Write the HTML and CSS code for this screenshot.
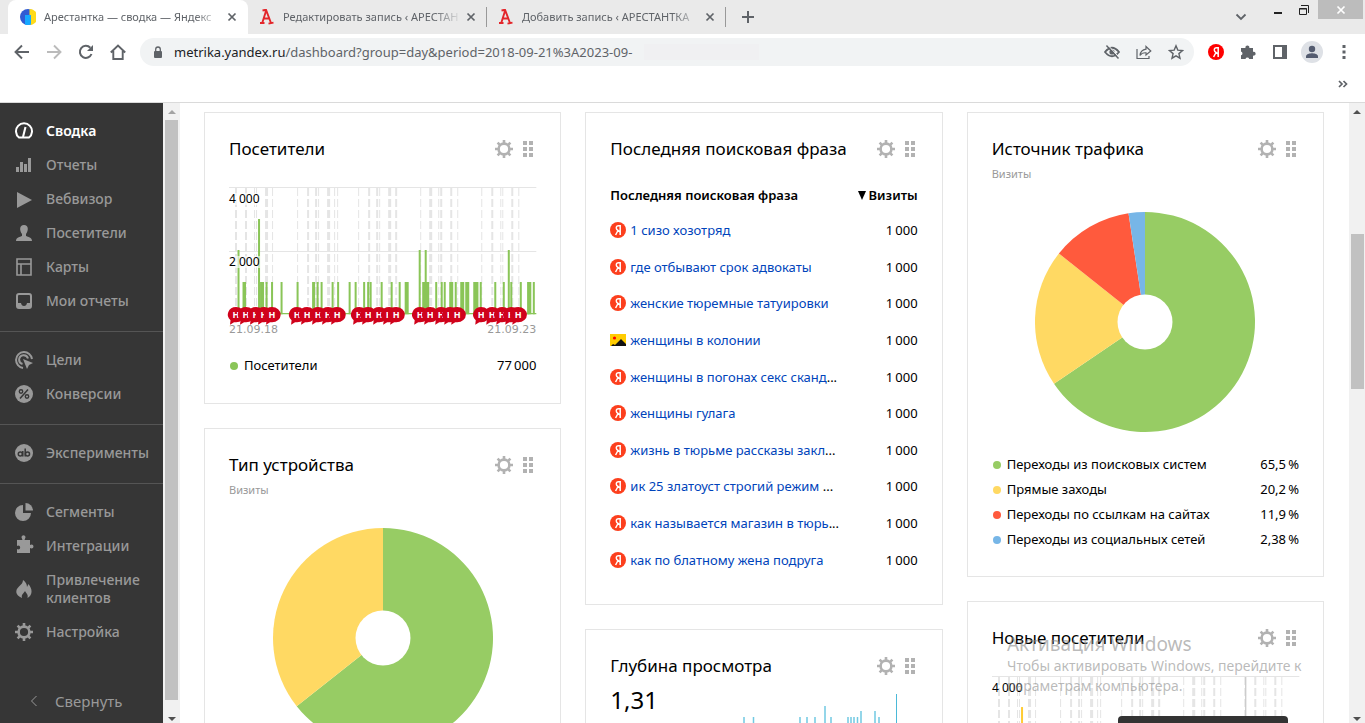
FILE: index.html
```html
<!DOCTYPE html>
<html lang="ru">
<head>
<meta charset="utf-8">
<title>Арестантка — сводка — Яндекс Метрика</title>
<link rel="stylesheet" href="styles.css">
</head>
<body>
<svg class="sprite" aria-hidden="true">
  <symbol id="gear" viewBox="0 0 18 18">
    <circle cx="9" cy="9" r="5.400" fill="none" stroke="currentColor" stroke-width="2.600"/>
    <path d="M9 0v4M9 14v4M0 9h4M14 9h4M2.600 2.600l3 3M12.400 12.400l3 3M15.400 2.600l-3 3M5.600 12.400l-3 3" stroke="currentColor" stroke-width="2.600"/>
  </symbol>
  <symbol id="dots" viewBox="0 0 10 16">
    <path fill="currentColor" d="M0 0h4v4H0zM6 0h4v4H6zM0 6h4v4H0zM6 6h4v4H6zM0 12h4v4H0zM6 12h4v4H6z"/>
  </symbol>
  <symbol id="close" viewBox="0 0 10 10"><path d="M1.500 1.500l7 7M8.500 1.500l-7 7" stroke="currentColor" stroke-width="1.700"/></symbol>
  <symbol id="ya" viewBox="0 0 16 16">
    <circle cx="8" cy="8" r="8" fill="currentColor"/>
    <path d="M10.200 3v10M10.200 3.700H8.600c-1.600 0-2.300.9-2.300 2.200 0 1.200.6 1.900 1.700 2.600L10 9.800M8 8.500L5.600 13" fill="none" stroke="#fff" stroke-width="1.500"/>
  </symbol>
  <symbol id="up" viewBox="0 0 8 4"><path d="M0 4l4-4 4 4z" fill="currentColor"/></symbol>
  <symbol id="down" viewBox="0 0 8 4"><path d="M0 0l4 4 4-4z" fill="currentColor"/></symbol>
  <symbol id="site" viewBox="0 0 16 16"><path d="M3.500 1.500l3.500-.8 4.800 12.800M7 2L3.400 13.500M4.800 9.500h5.400M1 14h4.500M9.500 14.600l5-1" fill="none" stroke="#e3262b" stroke-width="1.900"/></symbol>
</svg>

<header class="tabstrip">
  <div class="tab tab-active">
    <svg class="favicon" viewBox="0 0 16 16"><circle cx="8" cy="8" r="8" fill="#315bd3"/><path d="M9.500 0A8 8 0 0 1 9.500 16z" fill="#ffdb1a"/><path d="M5 6h6v9.500a8 8 0 0 1-6 0z" fill="#16a8ff"/><path d="M11 .6a8 8 0 0 1 0 14.800z" fill="#ffdb1a"/></svg>
    <span class="tab-title">Арестантка — сводка — Яндекс</span>
    <button class="icon-btn tab-close" aria-label="Закрыть вкладку"><svg width="10" height="10"><use href="#close"/></svg></button>
  </div>
  <div class="tab">
    <svg class="favicon"><use href="#site"/></svg>
    <span class="tab-title">Редактировать запись ‹ АРЕСТАН</span>
    <button class="icon-btn tab-close" aria-label="Закрыть вкладку"><svg width="10" height="10"><use href="#close"/></svg></button>
  </div>
  <div class="tab">
    <svg class="favicon"><use href="#site"/></svg>
    <span class="tab-title">Добавить запись ‹ АРЕСТАНТКА</span>
    <button class="icon-btn tab-close" aria-label="Закрыть вкладку"><svg width="10" height="10"><use href="#close"/></svg></button>
  </div>
  <button class="icon-btn new-tab" aria-label="Новая вкладка"><svg width="12" height="12" viewBox="0 0 12 12"><path d="M6 0v12M0 6h12" stroke="currentColor" stroke-width="2"/></svg></button>
  <div class="window-controls">
    <button class="icon-btn tab-search" aria-label="Поиск вкладок"><svg width="12" height="8" viewBox="0 0 12 8"><path d="M1.500 1.500L6 6l4.500-4.500" fill="none" stroke="#5f6368" stroke-width="1.800"/></svg></button>
    <button class="icon-btn win" aria-label="Свернуть"><svg width="12" height="10" viewBox="0 0 12 10"><path d="M2 7h8v2H2z" fill="#222"/></svg></button>
    <button class="icon-btn win" aria-label="Окно"><svg width="12" height="12" viewBox="0 0 12 12"><path d="M1.500 4.500h7v6h-7zM1 5h8M3 1.500h7.500V9" fill="none" stroke="#222"/></svg></button>
    <button class="icon-btn win-close" aria-label="Закрыть"><svg width="10" height="10"><use href="#close"/></svg></button>
  </div>
</header>

<nav class="toolbar" aria-label="Браузер">
  <button class="icon-btn nav-btn" aria-label="Назад"><svg width="16" height="16" viewBox="0 0 16 16"><path d="M15 8H2M8 1.500L1.500 8 8 14.500" fill="none" stroke="currentColor" stroke-width="1.900"/></svg></button>
  <button class="icon-btn nav-btn faded" aria-label="Вперёд"><svg width="16" height="16" viewBox="0 0 16 16"><path d="M1 8h13M8 1.500L14.500 8 8 14.500" fill="none" stroke="currentColor" stroke-width="1.900"/></svg></button>
  <button class="icon-btn nav-btn" aria-label="Обновить"><svg width="16" height="16" viewBox="0 0 16 16"><path d="M13.500 10A6 6 0 1 1 12.300 3.800" fill="none" stroke="currentColor" stroke-width="2"/><path d="M15 1v6H9z" fill="currentColor"/></svg></button>
  <button class="icon-btn nav-btn" aria-label="Домой"><svg width="16" height="16" viewBox="0 0 16 16"><path d="M.8 8.500L8 1.500l7.200 7M3.300 7v8h9.400V7" fill="none" stroke="currentColor" stroke-width="1.900"/></svg></button>
  <div class="omnibox">
    <svg width="10" height="13" viewBox="0 0 10 13"><rect x="1" y="5" width="8" height="7" rx="1" fill="#5f6368"/><path d="M2.700 6V3.300a2.300 2.300 0 0 1 4.600 0V6" fill="none" stroke="#5f6368" stroke-width="1.300"/></svg>
    <span class="url" role="textbox" aria-label="Адрес"><b>metrika.yandex.ru</b>/dashboard?group=day&amp;period=2018-09-21%3A2023-09-</span>
    <span class="smudge"></span>
    <span class="omni-actions">
      <button class="icon-btn" aria-label="Файлы cookie"><svg width="16" height="16" viewBox="0 0 16 16"><path d="M1 8q7-8.500 14 0q-7 8.500-14 0z" fill="none" stroke="currentColor" stroke-width="1.800"/><circle cx="8" cy="8" r="2.600" fill="currentColor"/><path d="M2.500 1.500l12 13" stroke="currentColor" stroke-width="1.600"/><path d="M3.800 1l11.500 12.500" stroke="#f1f3f4"/></svg></button>
      <button class="icon-btn" aria-label="Поделиться"><svg width="16" height="16" viewBox="0 0 16 16"><path d="M1 5v9.500h12V12M10 2.500L14.800 7 10 11V8.800Q6 8.500 4 11.500 4.500 6 10 5.200z" fill="none" stroke="currentColor" stroke-width="1.200"/></svg></button>
      <button class="icon-btn" aria-label="Закладка"><svg width="16" height="16" viewBox="0 0 16 16"><path d="M8 1.800l1.800 4.300 4.700.4-3.600 3.100 1.100 4.600L8 11.800l-4 2.400 1.100-4.600L1.500 6.500l4.700-.4z" fill="none" stroke="currentColor" stroke-width="1.400"/></svg></button>
    </span>
  </div>
  <div class="extensions">
    <button class="icon-btn ya-ext" aria-label="Яндекс"><svg width="16" height="16"><use href="#ya"/></svg></button>
    <button class="icon-btn" aria-label="Расширения"><svg width="16" height="16" viewBox="0 0 16 16"><path d="M1 4h4.500a2 2 0 1 1 3.800 0H13v3.800a2 2 0 1 1 0 3.800V15H9.200a1.900 1.900 0 0 0-3.700 0H1v-3.700a1.900 1.900 0 0 0 0-3.700z" fill="currentColor"/></svg></button>
    <button class="icon-btn" aria-label="Боковая панель"><svg width="14" height="14" viewBox="0 0 14 14"><path d="M1 1h12v12H1z" fill="none" stroke="currentColor" stroke-width="2"/><path d="M9 0h5v14H9z" fill="currentColor"/></svg></button>
    <button class="icon-btn avatar" aria-label="Профиль"><svg width="14" height="14" viewBox="0 0 14 14"><circle cx="7" cy="4" r="3.200" fill="#545c70"/><path d="M1 13v-1.500C1 9 5 8.300 7 8.300s6 .7 6 3.200V13z" fill="#545c70"/></svg></button>
    <button class="icon-btn" aria-label="Меню"><svg width="4" height="14" viewBox="0 0 4 14"><path d="M.5 0h3v3h-3zM.5 5.500h3v3h-3zM.5 11h3v3h-3z" fill="currentColor"/></svg></button>
  </div>
</nav>
<div class="bookmarks"><button class="icon-btn" aria-label="Другие закладки"><svg width="10" height="8" viewBox="0 0 10 8"><path d="M1 1l3 3-3 3M5.500 1l3 3-3 3" fill="none" stroke="currentColor" stroke-width="1.700"/></svg></button></div>

<div class="page">
  <nav class="sidebar" aria-label="Метрика">
    <div class="group">
      <a class="item current" href="#"><svg viewBox="0 0 18 18"><path d="M4 15.500a8 8 0 1 1 10 0z" fill="none" stroke="currentColor" stroke-width="2"/><path d="M8 15l2.500-10" stroke="currentColor" stroke-width="2"/></svg>Сводка</a>
      <a class="item" href="#"><svg viewBox="0 0 18 18"><path d="M1 11h3v5H1zM5 6h3v10H5zM9 8h3v8H9zM13 2h3v14h-3z" fill="currentColor"/></svg>Отчеты</a>
      <a class="item" href="#"><svg viewBox="0 0 18 18"><path d="M2 2l15 8-15 8z" fill="currentColor"/></svg>Вебвизор</a>
      <a class="item" href="#"><svg viewBox="0 0 18 18"><path d="M9 1c5 0 4.500 6 2 9v2c2 1 6 1 6 5H1c0-4 4-4 6-5v-2C4.500 7 4 1 9 1z" fill="currentColor"/></svg>Посетители</a>
      <a class="item" href="#"><svg viewBox="0 0 18 18"><path d="M2 1h14v16H2zM2 6h14M6 6v11" fill="none" stroke="currentColor" stroke-width="1.600"/></svg>Карты</a>
      <a class="item" href="#"><svg viewBox="0 0 18 18"><rect x="2" y="2" width="14" height="14" rx="2" fill="none" stroke="currentColor" stroke-width="2"/><path d="M2 11h4q.5 3 3 3t3-3h4v5H2z" fill="currentColor"/></svg>Мои отчеты</a>
    </div>
    <div class="group">
      <a class="item" href="#"><svg viewBox="0 0 18 18"><path d="M8 17A8 8 0 1 1 17 8M7.500 13A4.500 4.500 0 1 1 13 7.500" fill="none" stroke="currentColor" stroke-width="2"/><path d="M8 8l10 4-4 2-2 4z" fill="currentColor"/></svg>Цели</a>
      <a class="item" href="#"><svg viewBox="0 0 18 18"><circle cx="9" cy="9" r="9" fill="currentColor"/><path d="M13 4.500l-8 9" stroke="#363636" stroke-width="1.500"/><circle cx="6" cy="6.500" r="1.700" fill="none" stroke="#363636" stroke-width="1.400"/><circle cx="12" cy="11.500" r="1.700" fill="none" stroke="#363636" stroke-width="1.400"/></svg>Конверсии</a>
    </div>
    <div class="group">
      <a class="item" href="#"><svg viewBox="0 0 18 18"><circle cx="9" cy="9" r="9" fill="currentColor"/><g fill="none" stroke="#363636" stroke-width="1.500"><circle cx="5.300" cy="10" r="2"/><circle cx="12.500" cy="10" r="2"/><path d="M7.800 7v5.500M10.200 4.500v8"/></g></svg>Эксперименты</a>
    </div>
    <div class="group">
      <a class="item" href="#"><svg viewBox="0 0 18 18"><path d="M8 2v8h8a8 8 0 1 1-8-8z" fill="currentColor"/><path d="M10.500 0a7.500 7.500 0 0 1 7.500 7.500h-7.500z" fill="currentColor"/></svg>Сегменты</a>
      <a class="item" href="#"><svg viewBox="0 0 18 18" overflow="visible"><path d="M2 3h5.500l-.6-1.500a2 2 0 1 1 3.200 0L9.500 3H15v5l1.500-.5a2 2 0 1 1 0 4L15 11v5H2v-4l1.200.5a2 2 0 1 0 0-4L2 9z" fill="currentColor"/></svg>Интеграции</a>
      <a class="item" href="#"><svg viewBox="0 0 18 18"><path d="M8 0c4 3 4 6 4 7l1.500-3c4 5 4.500 11-1 14 1-4-1.500-4.500-2.500-7-1 2.500-4 3-3 7C0 15 0 10 4 6.500 6 4.500 8 3 8 0z" fill="currentColor"/></svg><span>Привлечение клиентов</span></a>
      <a class="item" href="#"><svg><use href="#gear"/></svg>Настройка</a>
    </div>
    <button class="collapse"><svg width="8" height="12" viewBox="0 0 8 12"><path d="M6.500 1l-5 5 5 5" fill="none" stroke="currentColor"/></svg>Свернуть</button>
  </nav>
  <div class="scrollbar side-scroll" aria-hidden="true"><svg class="arrow dim"><use href="#up"/></svg><span class="thumb"></span><svg class="arrow"><use href="#down"/></svg></div>

  <main class="dashboard">
    <div class="column">
      <section class="card">
        <div class="card-head"><h2>Посетители</h2><button class="icon-btn" aria-label="Настроить"><svg width="18" height="18"><use href="#gear"/></svg></button><button class="icon-btn" aria-label="Переместить"><svg width="10" height="16"><use href="#dots"/></svg></button></div>
        <svg class="chart" viewBox="0 0 307 127">
          <g id="plot-grid" stroke="#e5e5e5" fill="none">
            <path d="M0 .5h307M0 64.500h307"/>
            <g stroke-dasharray="8 3">
              <path d="M25.500 1v126M27.500 1v126M43.500 1v126M68.500 1v126M89.500 1v126M105.500 1v126M108.500 1v126M129.500 1v126M150.500 1v126M191.500 1v126M209.500 1v126M228.500 1v126M252.500 1v126M271.500 1v126M273.500 1v126M289.500 1v126"/>
              <path stroke-width="2" d="M7 1v126M17 1v126M79 1v126M87 1v126M140 1v126M148 1v126M167 1v126M212 1v126M222 1v126M263 1v126M283 1v126"/>
              <path stroke-width="3" d="M37.500 1v126M99.500 1v126M160.500 1v126M201.500 1v126"/>
            </g>
          </g>
          <g stroke="#8ac558" fill="none">
            <path d="M0 126.500h307"/>
            <path stroke-width="2" d="M9.500 127V63M30 127V32M190.500 127V63M196.500 127V63M279.500 127V63"/>
            <path stroke-width="2" d="M14.500 127V95M16 127V95M32 127V95M34 127V95M37.500 127V95M43 127V95M52.500 127V95M68.500 127V95M84 127V95M85 127V95M88.500 127V95M92.500 127V95M103.500 127V95M109 127V95M120.500 127V95M126.500 127V95M135 127V95M139 127V95M141.500 127V95M152.500 127V95M162.500 127V95M170.500 127V95M207 127V95M212.500 127V95M215.500 127V95M221 127V95M223 127V95M226.500 127V95M245 127V95M248 127V95M251.500 127V95M266 127V95M274.500 127V95M282 127V95M291.500 127V95M299 127V95M304.500 127V95"/>
            <path stroke-width="4" d="M177.500 127V95M195 127V95M198 127V95M233 127V95M238 127V95M247 127V95M300 127V95"/>
          </g>
          <path d="M0 6h31v12H0zM0 69h31v12H0z" fill="#fff" opacity=".6"/>
          <text class="axis" x="0" y="16">4 000</text>
          <text class="axis" x="0" y="79">2 000</text>
          <g>
            <symbol id="pin" viewBox="0 0 16 18" overflow="visible"><path d="M8 0a8.500 7.500 0 0 1 0 15.200H6L2 17.500 2.500 13A8.500 7.500 0 0 1 8 0z" fill="#d0021b"/><text x="8" y="11" text-anchor="middle">Н</text></symbol>
            <use href="#pin" x="-1" y="120" width="16" height="18"/><use href="#pin" x="9" y="120" width="16" height="18"/><use href="#pin" x="19" y="120" width="16" height="18"/><use href="#pin" x="27" y="120" width="16" height="18"/><use href="#pin" x="35" y="120" width="16" height="18"/>
            <use href="#pin" x="60" y="120" width="16" height="18"/><use href="#pin" x="70" y="120" width="16" height="18"/><use href="#pin" x="81" y="120" width="16" height="18"/><use href="#pin" x="91" y="120" width="16" height="18"/><use href="#pin" x="100" y="120" width="16" height="18"/>
            <use href="#pin" x="122" y="120" width="16" height="18"/><use href="#pin" x="131" y="120" width="16" height="18"/><use href="#pin" x="142" y="120" width="16" height="18"/><use href="#pin" x="152" y="120" width="16" height="18"/><use href="#pin" x="159" y="120" width="16" height="18"/>
            <use href="#pin" x="183" y="120" width="16" height="18"/><use href="#pin" x="193" y="120" width="16" height="18"/><use href="#pin" x="204" y="120" width="16" height="18"/><use href="#pin" x="213" y="120" width="16" height="18"/><use href="#pin" x="220" y="120" width="16" height="18"/>
            <use href="#pin" x="244" y="120" width="16" height="18"/><use href="#pin" x="255" y="120" width="16" height="18"/><use href="#pin" x="265" y="120" width="16" height="18"/><use href="#pin" x="274" y="120" width="16" height="18"/><use href="#pin" x="281" y="120" width="16" height="18"/>
          </g>
        </svg>
        <div class="dates"><span>21.09.18</span><span>21.09.23</span></div>
        <ul class="legend visitors-legend"><li><i class="dot green-dark"></i>Посетители<span>77&thinsp;000</span></li></ul>
      </section>
      <section class="card">
        <div class="card-head"><h2>Тип устройства</h2><button class="icon-btn" aria-label="Настроить"><svg width="18" height="18"><use href="#gear"/></svg></button><button class="icon-btn" aria-label="Переместить"><svg width="10" height="16"><use href="#dots"/></svg></button></div>
        <p class="metric">Визиты</p>
        <svg class="pie" viewBox="0 0 220 220">
          <path d="M110 110V0A110 110 0 1 1 23.700 178.200z" fill="#97cc64"/>
          <path d="M110 110L23.700 178.200A110 110 0 0 1 110 0z" fill="#ffd963"/>
          <circle cx="110" cy="110" r="27.500" fill="#fff"/>
        </svg>
      </section>
    </div>

    <div class="column">
      <section class="card">
        <div class="card-head"><h2>Последняя поисковая фраза</h2><button class="icon-btn" aria-label="Настроить"><svg width="18" height="18"><use href="#gear"/></svg></button><button class="icon-btn" aria-label="Переместить"><svg width="10" height="16"><use href="#dots"/></svg></button></div>
        <table class="phrases">
          <thead><tr><th scope="col">Последняя поисковая фраза</th><th scope="col"><svg width="8" height="9" viewBox="0 0 8 9"><path d="M0 0h8L4 9z"/></svg>&thinsp;Визиты</th></tr></thead>
          <tbody>
            <tr><td><div><svg class="engine"><use href="#ya"/></svg><a href="#">1 сизо хозотряд</a></div></td><td>1&thinsp;000</td></tr>
            <tr><td><div><svg class="engine"><use href="#ya"/></svg><a href="#">где отбывают срок адвокаты</a></div></td><td>1&thinsp;000</td></tr>
            <tr><td><div><svg class="engine"><use href="#ya"/></svg><a href="#">женские тюремные татуировки</a></div></td><td>1&thinsp;000</td></tr>
            <tr><td><div><svg class="engine" viewBox="0 0 16 16"><path d="M0 2h16v12H0z" fill="#fc0"/><path d="M1 14l2-2 2 1 1-1 5-5 5 5v2z" fill="#111"/><circle cx="4.500" cy="6" r="1.600" fill="#f00"/></svg><a href="#">женщины в колонии</a></div></td><td>1&thinsp;000</td></tr>
            <tr><td><div><svg class="engine"><use href="#ya"/></svg><a href="#">женщины в погонах секс сканд</a>...</div></td><td>1&thinsp;000</td></tr>
            <tr><td><div><svg class="engine"><use href="#ya"/></svg><a href="#">женщины гулага</a></div></td><td>1&thinsp;000</td></tr>
            <tr><td><div><svg class="engine"><use href="#ya"/></svg><a href="#">жизнь в тюрьме рассказы закл</a>...</div></td><td>1&thinsp;000</td></tr>
            <tr><td><div><svg class="engine"><use href="#ya"/></svg><a href="#">ик 25 златоуст строгий режим </a>...</div></td><td>1&thinsp;000</td></tr>
            <tr><td><div><svg class="engine"><use href="#ya"/></svg><a href="#">как называется магазин в тюрь</a>...</div></td><td>1&thinsp;000</td></tr>
            <tr><td><div><svg class="engine"><use href="#ya"/></svg><a href="#">как по блатному жена подруга</a></div></td><td>1&thinsp;000</td></tr>
          </tbody>
        </table>
      </section>
      <section class="card">
        <div class="card-head"><h2>Глубина просмотра</h2><button class="icon-btn" aria-label="Настроить"><svg width="18" height="18"><use href="#gear"/></svg></button><button class="icon-btn" aria-label="Переместить"><svg width="10" height="16"><use href="#dots"/></svg></button></div>
        <div class="depth"><strong>1,31</strong>
          <svg width="176" height="60" viewBox="0 0 176 60"><path d="M2 60V23M11.500 60V23M58 60V23M65 60V23M73 60V23M83 60V12M89 60V23M106 60V23M109 60V23M112 60V23M115.500 60V23M119 60V17M133 60V17M137 60V23" fill="none" stroke="#72c9e2" stroke-width="1.500"/><path d="M154.500 60V0" stroke="#4bb9d8"/></svg>
        </div>
      </section>
    </div>

    <div class="column">
      <section class="card">
        <div class="card-head"><h2>Источник трафика</h2><button class="icon-btn" aria-label="Настроить"><svg width="18" height="18"><use href="#gear"/></svg></button><button class="icon-btn" aria-label="Переместить"><svg width="10" height="16"><use href="#dots"/></svg></button></div>
        <p class="metric">Визиты</p>
        <svg class="pie" viewBox="0 0 220 220">
          <path d="M110 110V0A110 110 0 1 1 19 171.800z" fill="#97cc64"/>
          <path d="M110 110L19 171.800A110 110 0 0 1 23.900 41.500z" fill="#ffd963"/>
          <path d="M110 110L23.900 41.500A110 110 0 0 1 93.500 1.200z" fill="#ff5a3d"/>
          <path d="M110 110L93.500 1.200A110 110 0 0 1 110 0z" fill="#77b6e7"/>
          <circle cx="110" cy="110" r="27.500" fill="#fff"/>
        </svg>
        <ul class="legend">
          <li><i class="dot green"></i>Переходы из поисковых систем<span>65,5&thinsp;%</span></li>
          <li><i class="dot yellow"></i>Прямые заходы<span>20,2&thinsp;%</span></li>
          <li><i class="dot red"></i>Переходы по ссылкам на сайтах<span>11,9&thinsp;%</span></li>
          <li><i class="dot blue"></i>Переходы из социальных сетей<span>2,38&thinsp;%</span></li>
        </ul>
      </section>
      <section class="card">
        <div class="card-head"><h2>Новые посетители</h2><button class="icon-btn" aria-label="Настроить"><svg width="18" height="18"><use href="#gear"/></svg></button><button class="icon-btn" aria-label="Переместить"><svg width="10" height="16"><use href="#dots"/></svg></button></div>
        <svg class="chart" viewBox="0 0 307 127"><use href="#plot-grid"/><path d="M253.500 1v126" stroke="#bbb"/><path d="M30 127V31" stroke="#ffcc33" stroke-width="2"/><text class="axis" x="0" y="16">4 000</text></svg>
      </section>
    </div>
  </main>
  <div class="scrollbar main-scroll" aria-hidden="true"><svg class="arrow"><use href="#up"/></svg><span class="thumb"></span><svg class="arrow"><use href="#down"/></svg></div>
  <div class="hint"></div>
  <div class="activation"><strong>Активация Windows</strong><p>Чтобы активировать Windows, перейдите к параметрам компьютера.</p></div>
</div>
</body>
</html>
```
FILE: styles.css
```css
* { box-sizing: border-box; }
body {
  margin: 0;
  height: 100vh;
  display: flex;
  flex-direction: column;
  overflow: hidden;
  background: #fff;
  color: #000;
  font: 13px/20px "Noto Sans", "Open Sans", sans-serif;
}
h2, p, ul { margin: 0; padding: 0; font-weight: 400; }
svg { display: block; flex: none; }
a { color: #04b; text-decoration: none; }
.sprite { position: absolute; width: 0; height: 0; }
.icon-btn {
  display: flex;
  align-items: center;
  justify-content: center;
  flex: none;
  padding: 0;
  border: 0;
  background: none;
  color: #5f6368;
}

/* tabs */
.tabstrip { display: flex; flex: none; height: 34px; padding-left: 8px; background: #eaeaea; }
.tab {
  display: flex;
  align-items: center;
  width: 239px;
  padding: 0 11px;
  color: #5f6368;
  font-size: 11px;
}
.tab:not(.tab-active) { background: linear-gradient(#999, #999) right 7px / 1px 20px no-repeat; }
.tab-active { width: 240px; padding: 0 11px 0 12px; background: #fff; border-radius: 8px 8px 0 0; }
.favicon { width: 16px; height: 16px; }
.tab-title {
  flex: 1;
  min-width: 0;
  margin: 0 4px 0 8px;
  overflow: hidden;
  white-space: nowrap;
  mask-image: linear-gradient(to right, #000 84%, transparent);
}
.tab-close { width: 10px; height: 16px; }
.new-tab { width: 44px; }
.window-controls { display: flex; align-items: flex-start; margin-left: auto; padding-right: 2px; }
.tab-search { width: 26px; height: 34px; margin-right: 11px; }
.win { width: 26px; height: 19px; }
.win-close { width: 45px; height: 19px; margin-left: 1px; background: #bcbcbc; color: #fff; }

/* toolbar */
.toolbar { display: flex; align-items: center; flex: none; height: 36px; padding: 0 13px 0 6px; }
.nav-btn { width: 32px; height: 32px; }
.faded { color: #bbb; }
.omnibox {
  display: flex;
  align-items: center;
  flex: 1;
  min-width: 0;
  height: 28px;
  margin-left: 6px;
  padding: 0 10px 0 13px;
  border-radius: 14px;
  background: #f1f3f4;
}
.url { margin-left: 11px; color: #5f6368; white-space: nowrap; }
.url b { font-weight: 400; color: #202124; }
.smudge { width: 115px; height: 16px; margin-left: 12px; background: #f0f0f2; }
.omni-actions { display: flex; gap: 16px; margin-left: auto; }
.extensions { display: flex; align-items: center; gap: 16px; margin-left: 14px; }
.extensions .icon-btn { min-width: 16px; }
.extensions .ya-ext { color: #f00; }
.extensions .avatar { width: 22px; height: 22px; margin: 0 -3px; border-radius: 50%; background: #dee1e6; }
.bookmarks { display: flex; flex: none; align-items: center; justify-content: flex-end; height: 33px; padding: 0 17px 5px 0; border-bottom: 1px solid #dadada; }

/* sidebar */
.page { position: relative; display: flex; flex: 1; min-height: 0; overflow: hidden; }
.sidebar { display: flex; flex-direction: column; flex: none; width: 163px; background: #363636; }
.group { padding: 11px 0 13px; border-bottom: 1px solid #555; }
.group:nth-of-type(4) { border: 0; }
.item {
  display: flex;
  align-items: center;
  gap: 13px;
  padding: 8px 12px 8px 15px;
  color: #999;
  font-size: 14px;
  font-weight: 500;
  line-height: 18px;
}
.item svg { width: 18px; height: 18px; }
.current { color: #fff; font-weight: 600; }
.collapse {
  display: flex;
  align-items: center;
  gap: 17px;
  margin: auto 0 10px;
  padding: 0 0 0 30px;
  border: 0;
  background: none;
  color: #999;
  font: 15px/24px "Noto Sans", "Open Sans", sans-serif;
}
.scrollbar { display: flex; flex-direction: column; align-items: center; flex: none; padding: 7px 0 2px; background: #f1f1f1; color: #505050; }
.arrow { width: 8px; height: 4px; }
.dim { color: #a3a3a3; }
.side-scroll { width: 17px; }
.thumb { width: 13px; background: #c1c1c1; }
.side-scroll .thumb { flex: 1; margin: 6px 0 17px; }
.main-scroll { width: 16px; }
.main-scroll .thumb { height: 155px; margin: 120px 0 auto; }

/* dashboard */
.dashboard {
  display: grid;
  grid-template-columns: repeat(3, minmax(0, 1fr));
  gap: 24px;
  flex: 1;
  min-width: 0;
  padding: 9px 25px 0 24px;
}
.column { display: flex; flex-direction: column; gap: 24px; }
.card { flex: none; padding: 24px; border: 1px solid #e5e5e5; }
.card-head { display: flex; align-items: center; gap: 10px; padding-right: 3px; }
.card-head h2 { flex: 1; white-space: nowrap; font-size: 17px; line-height: 24px; }
.card-head .icon-btn { color: #b2b2b2; }
.metric { margin-top: 5px; color: #999; font-size: 11px; line-height: 16px; }
.chart { width: 100%; margin-top: 26px; overflow: visible; }
.axis { font-size: 12px; }
#pin text { fill: #fff; font: 700 9px "Open Sans", sans-serif; }
.dates { display: flex; justify-content: space-between; margin-top: 8px; color: #999; font: 11px/16px "DejaVu Sans", sans-serif; }
.pie { width: 220px; height: 220px; margin: 30px auto 0; }
.legend { margin-top: 20px; list-style: none; line-height: 25px; }
.visitors-legend { margin: 15px 0 1px; }
.legend li { display: flex; align-items: center; white-space: nowrap; }
.legend span { margin-left: auto; }
.dot { width: 8px; height: 8px; margin: 0 6px 0 1px; border-radius: 50%; }
.green-dark { background: #8ac558; }
.green { background: #97cc64; }
.yellow { background: #ffd963; }
.red { background: #ff5a3d; }
.blue { background: #77b6e7; }
.phrases { width: 100%; height: 400px; margin: 17px 0 2px; border-collapse: collapse; }
.phrases th, .phrases td { padding: 0; text-align: left; white-space: nowrap; }
.phrases th { height: 34px; font-weight: 600; }
.phrases th:last-child, .phrases td:last-child { text-align: right; }
.phrases th svg { display: inline-block; }
.phrases td div { display: flex; align-items: center; }
.phrases a { white-space: pre; }
.engine { width: 16px; height: 16px; margin-right: 4px; color: #fc3f1d; }
.depth { display: flex; justify-content: space-between; margin-top: 7px; }
.depth strong { font-size: 24px; font-weight: 400; line-height: 30px; }
.depth svg { margin-top: 9px; }

/* overlays */
.hint { position: absolute; right: 77px; bottom: 0; width: 170px; height: 7px; border-radius: 4px 4px 0 0; background: #333; }
.activation { position: absolute; right: 46px; bottom: 27px; width: 312px; color: rgba(140, 140, 140, 0.6); font-size: 14px; }
.activation strong { display: block; font-size: 19px; font-weight: 400; line-height: 24px; }
```
